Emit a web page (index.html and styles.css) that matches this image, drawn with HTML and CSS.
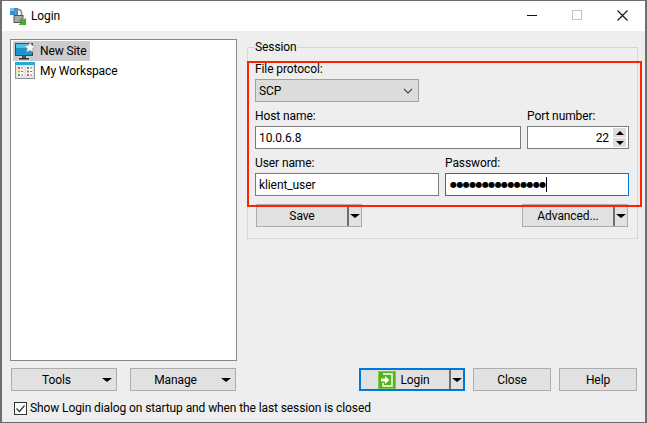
FILE: index.html
```html
<!DOCTYPE html>
<html lang="en">
<head>
    <meta charset="UTF-8">
    <title>Login</title>
    <link rel="stylesheet" href="styles.css">
</head>
<body>
    <div class="window">
        <div class="titlebar">
            <svg class="app-icon" width="18" height="18" viewBox="0 0 18 18">
                <rect x="1" y="1" width="8" height="7" fill="#2f8fd8"/>
                <rect x="1" y="1" width="4" height="3" fill="#7cc4f0"/>
                <path d="M6.5 8V5.5a3 3 0 0 1 6 0V8" fill="none" stroke="#8a8a8a" stroke-width="1.6"/>
                <rect x="4.5" y="8" width="10" height="8" fill="#555"/>
                <rect x="5.5" y="9" width="8" height="6" fill="#a9a9a9"/>
                <path d="M17 10.5v7.5H9.5l2.4-2.4-2.1-2.1 2.6-2.6 2.1 2.1z" fill="#4fa82a"/>
            </svg>
            <span class="title">Login</span>
            <div class="win-controls">
                <span class="win-min"></span>
                <span class="win-max"></span>
                <svg class="win-close" width="11" height="11" viewBox="0 0 11 11">
                    <path d="M0.5 0.5l10 10M10.5 0.5l-10 10" stroke="#111" stroke-width="1.1" fill="none"/>
                </svg>
            </div>
        </div>

        <div class="client">
            <div class="panes">
                <div class="tree">
                    <div class="tree-row selected">
                        <svg width="21" height="19" viewBox="0 0 21 19">
                            <rect x="0.5" y="1.5" width="17" height="12" fill="#1e93c9" stroke="#3c4a52"/>
                            <rect x="1" y="2" width="16" height="4" fill="#4fc1e6"/>
                            <rect x="7" y="14" width="4" height="2" fill="#4a5257"/>
                            <rect x="4" y="16" width="10" height="1.5" fill="#2f3539"/>
                            <path d="M15 0l1.7 3.4 3.8.5-2.8 2.6.7 3.7-3.4-1.8-3.4 1.8.7-3.7-2.8-2.6 3.8-.5z" fill="#f4f4f4" stroke="#9a9a9a" stroke-width="0.6"/>
                        </svg>
                        <span>New Site</span>
                    </div>
                    <div class="tree-row">
                        <svg width="21" height="19" viewBox="0 0 21 19">
                            <rect x="0.5" y="0.5" width="19" height="16" fill="#f2f2f2" stroke="#8f9498"/>
                            <rect x="0" y="0" width="20" height="3" fill="#2ba6d6"/>
                            <rect x="2" y="4" width="7" height="11" fill="#fff" stroke="#bbb" stroke-width="0.5"/>
                            <rect x="11" y="4" width="7" height="11" fill="#fff" stroke="#bbb" stroke-width="0.5"/>
                            <rect x="3" y="5" width="2" height="2" fill="#e2572b"/>
                            <rect x="3" y="8.500" width="2" height="2" fill="#e9a321"/>
                            <rect x="3" y="12" width="2" height="2" fill="#59a83a"/>
                            <rect x="12" y="5" width="2" height="2" fill="#59a83a"/>
                            <rect x="12" y="8.500" width="2" height="2" fill="#e2572b"/>
                            <rect x="12" y="12" width="2" height="2" fill="#a35fc9"/>
                            <path d="M6 6h2M6 9.500h2M6 13h2M15 6h2M15 9.500h2M15 13h2" stroke="#777" stroke-width="1"/>
                        </svg>
                        <span>My Workspace</span>
                    </div>
                </div>

                <fieldset class="session">
                    <legend>Session</legend>
                    <label class="caption">File protocol:</label>
                    <div class="select">
                        <span>SCP</span>
                        <svg width="10" height="6" viewBox="0 0 10 6">
                            <path d="M1 1l4 4 4-4" fill="none" stroke="#444" stroke-width="1.100"/>
                        </svg>
                    </div>
                    <div class="field-row">
                        <div class="host-col">
                            <label class="caption">Host name:</label>
                            <div class="field">10.0.6.8</div>
                        </div>
                        <div class="port-col">
                            <label class="caption">Port number:</label>
                            <div class="field port">
                                <span class="port-value">22</span>
                                <div class="spin">
                                    <span class="spin-btn"><i class="arrow up"></i></span>
                                    <span class="spin-btn"><i class="arrow"></i></span>
                                </div>
                            </div>
                        </div>
                    </div>
                    <div class="field-row">
                        <div class="half-col">
                            <label class="caption">User name:</label>
                            <div class="field">klient_user</div>
                        </div>
                        <div class="half-col">
                            <label class="caption">Password:</label>
                            <div class="field focused"><span class="dots">●●●●●●●●●●●●●●●</span><span class="caret"></span></div>
                        </div>
                    </div>
                    <div class="session-actions">
                        <button class="btn split">
                            <span class="btn-label">Save</span>
                            <span class="divider"></span>
                            <i class="arrow"></i>
                        </button>
                        <button class="btn split">
                            <span class="btn-label">Advanced...</span>
                            <span class="divider"></span>
                            <i class="arrow"></i>
                        </button>
                    </div>
                </fieldset>
            </div>

            <div class="actions">
                <button class="btn menu tools"><span class="btn-label">Tools</span><i class="arrow"></i></button>
                <button class="btn menu manage"><span class="btn-label">Manage</span><i class="arrow"></i></button>
                <button class="btn split default">
                    <span class="btn-label">
                        <svg width="18" height="18" viewBox="0 0 18 18">
                            <rect width="18" height="18" fill="#55b21c"/>
                            <rect x="0.500" y="0.500" width="17" height="17" fill="none" stroke="#7ccf3d"/>
                            <path d="M5 3h9v12H5v-3" fill="none" stroke="#fff" stroke-width="1.500"/>
                            <path d="M3 7.500h4V5l4.500 4L7 13v-2.500H3z" fill="#fff"/>
                        </svg>
                        Login
                    </span>
                    <span class="divider"></span>
                    <i class="arrow"></i>
                </button>
                <button class="btn plain">Close</button>
                <button class="btn plain">Help</button>
            </div>

            <div class="startup">
                <svg width="13" height="13" viewBox="0 0 13 13">
                    <rect x="0.500" y="0.500" width="12" height="12" fill="#fff" stroke="#333"/>
                    <path d="M2.500 6.500l3 3 5-6" fill="none" stroke="#333" stroke-width="1.200"/>
                </svg>
                <span>Show Login dialog on startup and when the last session is closed</span>
            </div>
        </div>

        <div class="highlight"></div>
    </div>
</body>
</html>
```

FILE: styles.css
```css
html, body {
    margin: 0;
    padding: 0;
}
body {
    font-family: Roboto, "Noto Sans", sans-serif;
    font-size: 12px;
    line-height: 16px;
    letter-spacing: -0.1px;
    color: #000;
    background-color: #fff;
}
svg {
    flex: none;
}
.window {
    position: relative;
    box-sizing: border-box;
    width: 647px;
    height: 423px;
    border: 1px solid #6e6e6e;
    border-left-width: 2px;
    border-right-width: 2px;
    background-color: #eeeeee;
    overflow: hidden;
}
.titlebar {
    display: flex;
    align-items: center;
    height: 30px;
    padding-left: 7px;
    background-color: #fff;
}
.app-icon {
    margin-right: 4px;
}
.title {
    flex: 1;
}
.win-controls {
    display: flex;
    align-items: center;
    padding: 0 17px 2px 0;
}
.win-min {
    width: 10px;
    height: 1px;
    background-color: #111;
    margin-right: 35px;
}
.win-max {
    box-sizing: border-box;
    width: 10px;
    height: 10px;
    border: 1px solid #c4c4c4;
    margin-right: 35px;
}
.client {
    padding: 8px 8px 0;
}
.panes {
    display: flex;
    gap: 10px;
    height: 322px;
}
.tree {
    flex: none;
    box-sizing: border-box;
    width: 227px;
    height: 322px;
    padding: 1px 2px;
    background-color: #fff;
    border: 1px solid #828790;
}
.tree-row {
    display: flex;
    align-items: center;
    gap: 4px;
    height: 20px;
    padding-left: 2px;
    box-sizing: border-box;
    white-space: nowrap;
}
.tree-row.selected {
    width: 77px;
    background-color: #cccccc;
}
.session {
    flex: none;
    box-sizing: border-box;
    width: 391px;
    height: 200px;
    margin: 0;
    padding: 6px 8px 0 7px;
    border: 1px solid #d6d6d6;
    min-width: 0;
}
.session legend {
    margin-left: 0;
    padding: 0 1px 0 0;
    line-height: 16px;
}
.caption {
    display: block;
    height: 16px;
    margin-bottom: 2px;
    white-space: nowrap;
}
.select {
    box-sizing: border-box;
    display: flex;
    align-items: center;
    justify-content: space-between;
    width: 164px;
    height: 23px;
    padding: 0 5px 0 3px;
    background-color: #dcdcdc;
    border: 1px solid #a0a0a0;
}
.field-row {
    display: flex;
    gap: 6px;
    margin-top: 6px;
}
.host-col {
    width: 266px;
}
.port-col {
    width: 102px;
}
.half-col {
    width: 184px;
}
.field {
    box-sizing: border-box;
    display: flex;
    align-items: center;
    height: 23px;
    padding: 0 3px;
    background-color: #fff;
    border: 1px solid #7a7a7a;
    white-space: nowrap;
}
.field.focused {
    border-color: #0078d7;
}
.dots {
    margin-left: 1px;
    font-family: "DejaVu Sans", sans-serif;
    font-size: 8px;
    letter-spacing: -0.6px;
}
.caret {
    width: 1px;
    height: 15px;
    background-color: #000;
}
.port {
    justify-content: flex-end;
    padding-right: 2px;
}
.port-value {
    margin-right: 4px;
}
.spin {
    display: flex;
    flex-direction: column;
    gap: 1px;
}
.spin-btn {
    display: flex;
    align-items: center;
    justify-content: center;
    width: 13px;
    height: 9px;
    background-color: #dcdcdc;
}
.spin .arrow {
    border-left-width: 4px;
    border-right-width: 4px;
}
.session-actions {
    display: flex;
    justify-content: space-between;
    padding: 0 1px;
    margin-top: 8px;
}
.btn {
    box-sizing: border-box;
    display: flex;
    align-items: center;
    width: 106px;
    height: 23px;
    padding: 0;
    font-family: inherit;
    font-size: 12px;
    line-height: 16px;
    letter-spacing: inherit;
    color: #000;
    background-color: #e1e1e1;
    border: 1px solid #adadad;
}
.btn-label {
    flex: 1;
    display: flex;
    align-items: center;
    justify-content: center;
    gap: 4px;
}
.divider {
    width: 2px;
    height: 21px;
    background-color: #6e6e6e;
}
.arrow {
    display: block;
    width: 0;
    height: 0;
    border-left: 5px solid transparent;
    border-right: 5px solid transparent;
    border-top: 4px solid #000;
}
.arrow.up {
    border-top: 0;
    border-bottom: 4px solid #000;
}
.split .arrow {
    margin: 0 1px;
}
.menu .arrow {
    margin: 0 4px 0 1px;
}
.actions {
    display: flex;
    gap: 8px;
    height: 23px;
    margin: 7px 0 0 1px;
}
.tools {
    margin-right: 5px;
}
.manage {
    margin-right: 115px;
}
.default {
    border: 2px solid #0078d7;
}
.default .btn-label {
    padding-right: 2px;
}
.default .divider {
    height: 19px;
}
.plain {
    justify-content: center;
    width: 78px;
}
.startup {
    display: flex;
    align-items: center;
    gap: 3px;
    margin: 9px 0 0 4px;
    white-space: nowrap;
}
.highlight {
    position: absolute;
    left: 245px;
    top: 60px;
    width: 391px;
    height: 142px;
    border: 2px solid #ff2200;
    pointer-events: none;
}
```
